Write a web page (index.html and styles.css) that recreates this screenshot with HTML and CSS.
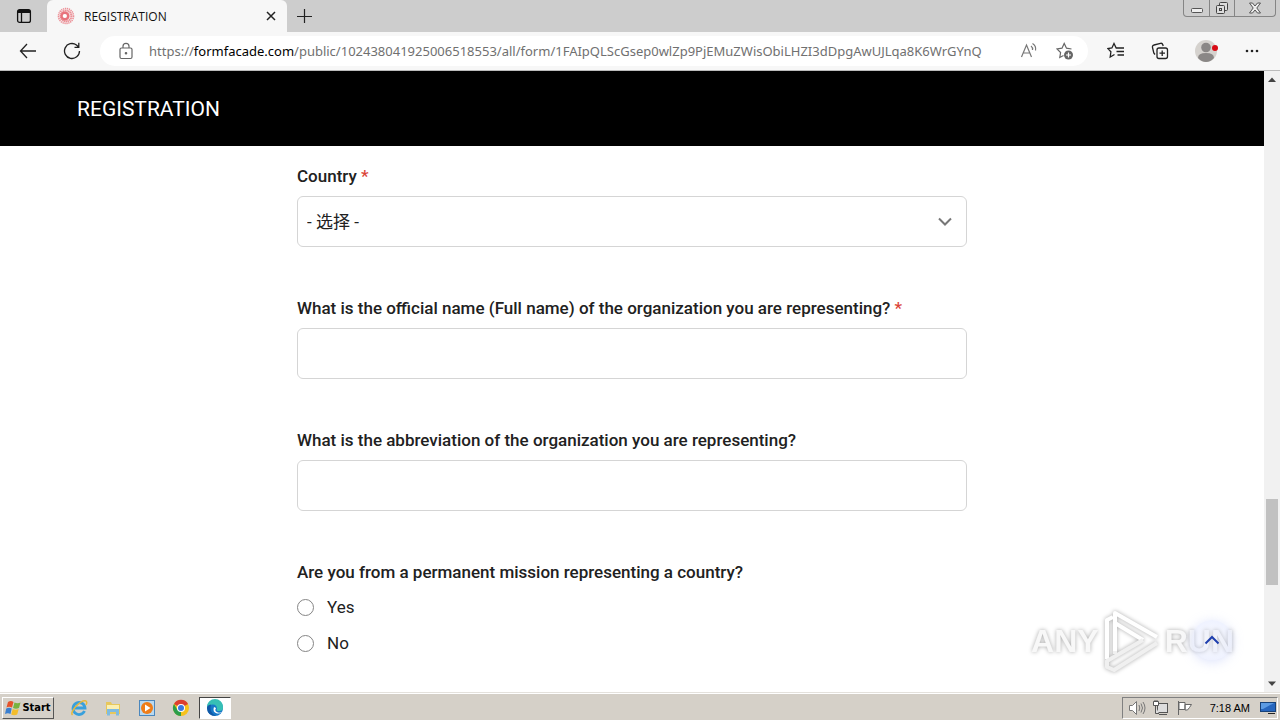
FILE: index.html
```html
<!DOCTYPE html>
<html lang="en">
<head>
  <meta charset="UTF-8">
  <meta name="viewport" content="width=device-width, initial-scale=1.0">
  <title>REGISTRATION</title>
  <link rel="stylesheet" href="styles.css">
</head>
<body>
  <div class="tab-strip">
    <button class="tab-menu" aria-label="Tab actions">
      <svg width="16" height="16" viewBox="0 0 16 16" fill="none" stroke="#111" stroke-width="1.3"><rect x="1.6" y="1.6" width="12.8" height="12.8" rx="2"/><path d="M5.500 5v9"/><path d="M2 3.500h12" stroke-width="3"/></svg>
    </button>
    <div class="tab">
      <svg width="18" height="18" viewBox="0 0 18 18" fill="none" stroke="#ec8f96"><circle cx="9" cy="9" r="7.5" stroke-width="1.6" stroke-dasharray="1.3 .7"/><circle cx="9" cy="9" r="5.4" stroke-width="2" stroke-dasharray="1.4 .4"/><circle cx="8" cy="9" r="3.300" stroke-width="2.600" stroke="#e8737c"/><circle cx="7.500" cy="9" r="1.800" fill="#fff" stroke="none"/></svg>
      <span class="tab-title">REGISTRATION</span>
      <button class="tab-close" aria-label="Close tab">
        <svg width="10" height="10" viewBox="0 0 10 10" stroke="#222" stroke-width="1.5"><path d="M1 1l8 8M9 1L1 9"/></svg>
      </button>
    </div>
    <button class="tab-new" aria-label="New tab">
      <svg width="16" height="16" viewBox="0 0 16 16" stroke="#222" stroke-width="1.2"><path d="M8.5 1v14M1 8.500h15"/></svg>
    </button>
    <div class="window-buttons">
      <button aria-label="Minimize"><svg width="14" height="14" viewBox="0 0 14 14" fill="#eee" stroke="#555"><rect x="1.5" y="7.5" width="11" height="4" rx="1"/></svg></button>
      <button aria-label="Restore"><svg width="14" height="14" viewBox="0 0 14 14" fill="#ddd" stroke="#444"><rect x="4.5" y="1.5" width="8" height="8" rx="1"/><rect x="1.5" y="4.5" width="8" height="8" rx="1"/><rect x="4.5" y="7.5" width="2" height="2"/></svg></button>
      <button class="wide" aria-label="Close"><svg width="14" height="14" viewBox="0 0 14 14"><path d="M1.5 2h3L7 5l2.500-3h3L8.800 7l3.700 5h-3L7 9l-2.500 3h-3l3.700-5z" fill="#eee" stroke="#555"/></svg></button>
    </div>
  </div>

  <div class="toolbar">
    <button aria-label="Back"><svg width="18" height="18" viewBox="0 0 18 18" fill="none" stroke="#222" stroke-width="1.3"><path d="M17 9H1.500M8 2L1.500 9 8 16"/></svg></button>
    <button class="reload" aria-label="Refresh"><svg width="18" height="18" viewBox="0 0 18 18" fill="none" stroke="#222" stroke-width="1.3"><path d="M16.500 9A7.500 7.500 0 1 1 13.500 3l2 2M15.800 .800V5.300H11.500"/></svg></button>
    <div class="address">
      <svg width="14" height="18" viewBox="0 0 14 18" fill="none" stroke="#666" stroke-width="1.2"><rect x="1" y="6" width="12" height="10.5" rx="1.5"/><path d="M4 6V4.300a3 3 0 0 1 6 0V6"/><circle cx="7" cy="11.200" r=".7" fill="#666"/></svg>
      <span class="url">https://<b>formfacade.com</b>/public/102438041925006518553/all/form/1FAIpQLScGsep0wlZp9PjEMuZWisObiLHZI3dDpgAwUJLqa8K6WrGYnQ</span>
      <button aria-label="Read aloud"><svg width="18" height="18" viewBox="0 0 18 18" fill="none" stroke="#777" stroke-width="1.2"><path d="M1.500 15L6.500 3l5 12M3.300 11h6.500M11 4q2 1.500 1.500 4M12.500 1.500q4 2.500 3 7"/></svg></button>
      <button aria-label="Add to favorites"><svg width="18" height="18" viewBox="0 0 18 18" fill="none" stroke="#666" stroke-width="1.2"><path d="M15.500 7l-5-.800-2.300-4.700-2.200 4.700L1 7l3.600 3.500-.8 5 3.700-2"/><circle cx="12.500" cy="13" r="4.500" fill="#666" stroke="none"/><path d="M12.500 10.500v5M10 13h5" stroke="#fff"/></svg></button>
    </div>
    <button class="favorites" aria-label="Favorites"><svg width="18" height="18" viewBox="0 0 18 18" fill="none" stroke="#222" stroke-width="1.3"><path d="M11 6H9.200L7 1.500 4.900 6l-4 .600 3 3.200-.700 5.200 4.300-2.500M10.500 6H17M9.500 9.500H17M10.500 13H17"/></svg></button>
    <button class="collections" aria-label="Collections"><svg width="18" height="18" viewBox="0 0 18 18" fill="none" stroke="#222" stroke-width="1.3"><rect x="6" y="6" width="10.5" height="10.5" rx="2"/><path d="M11.200 8.500v5.500M8.500 11.200H14M4 12.500L2.800 11 1.500 5.500a2 2 0 0 1 1.500-2.500l6.500-1.700a2 2 0 0 1 2.300 1.400l.4 1.300"/></svg></button>
    <button class="profile" aria-label="Profile"><svg width="24" height="24" viewBox="0 0 24 24"><circle cx="12" cy="12" r="11" fill="#d5d2ce"/><circle cx="12" cy="8.500" r="4.800" fill="#8a8786"/><path d="M4 19q0-5 8-5t8 5q-3.500 4-8 4t-8-4z" fill="#8a8786"/><circle cx="21" cy="9" r="3" fill="#d80b15"/></svg></button>
    <button class="more" aria-label="Settings and more"><svg width="16" height="16" viewBox="0 0 16 16" fill="#222"><circle cx="3" cy="8" r="1.3"/><circle cx="8" cy="8" r="1.3"/><circle cx="13" cy="8" r="1.3"/></svg></button>
  </div>

  <div class="viewport">
    <div class="page">
      <header class="page-header"><h1>REGISTRATION</h1></header>
      <form class="form">
        <div class="field">
          <label class="question" for="country">Country <span class="required">*</span></label>
          <div class="select-wrap">
            <select id="country"><option>- 选择 -</option></select>
            <svg width="14" height="10" viewBox="0 0 14 10" fill="none" stroke="#777" stroke-width="2"><path d="M1 1.500l6 6 6-6"/></svg>
          </div>
        </div>
        <div class="field">
          <label class="question" for="org-name">What is the official name (Full name) of the organization you are representing? <span class="required">*</span></label>
          <input class="text" id="org-name" type="text">
        </div>
        <div class="field">
          <label class="question" for="org-abbr">What is the abbreviation of the organization you are representing?</label>
          <input class="text" id="org-abbr" type="text">
        </div>
        <fieldset class="field">
          <legend class="question">Are you from a permanent mission representing a country?</legend>
          <label class="choice"><input type="radio" name="mission">Yes</label>
          <label class="choice"><input type="radio" name="mission">No</label>
        </fieldset>
      </form>
    </div>

    <div class="scrollbar">
      <svg width="16" height="17" viewBox="0 0 16 17"><path d="M4 11l4-4.500 4 4.500z" fill="#444"/></svg>
      <div class="track">
        <div class="thumb"></div>
      </div>
      <svg width="16" height="17" viewBox="0 0 16 17"><path d="M4 6.500l4 4.500 4-4.500z" fill="#444"/></svg>
    </div>

    <div class="watermark">
      <span>ANY</span>
      <svg width="60" height="66" viewBox="0 0 60 66" fill="none" stroke-width="4" stroke-linejoin="round"><path d="M5 51V12l6-3M13 46V5l42 24M13 15l28 17" stroke="#fff"/><path d="M41 32L5 53v6l7 3 43-27M13 46v-3" stroke="#f0f0f0"/></svg>
      <span>RUN</span>
    </div>
    <button class="to-top" aria-label="Back to top"><svg width="16" height="10" viewBox="0 0 16 10" fill="none" stroke="#1f3fae" stroke-width="2"><path d="M1.500 8.500L8 2l6.500 6.500"/></svg></button>
  </div>

  <div class="taskbar">
    <button class="start">
      <svg width="17" height="16" viewBox="0 0 17 16"><path d="M3 2q3-2 5.500 0L7 7.500q-3-1.500-5.500 0z" fill="#e5532b"/><path d="M9.500 2.500q3 1.500 6 0L14 8q-3 1.500-6 0z" fill="#78b340"/><path d="M1.200 8.500q3-1.500 5.500 0L5.500 14Q3 12.500 0 14z" fill="#3a7fd0"/><path d="M7.700 9q3 1.500 6 0l-1.500 5.500q-3 1.500-6 0z" fill="#f3bd2c"/></svg>
      Start
    </button>
    <button class="task" aria-label="Internet Explorer"><svg width="18" height="18" viewBox="0 0 18 18" fill="none"><path d="M14.500 12A6 6 0 1 1 15 9H5" stroke="#39a0dc" stroke-width="2.8"/><path d="M2.500 16C-1 13 11 .500 16 2q1.500 1 0 4" stroke="#e6b83b" stroke-width="1.5"/></svg></button>
    <button class="task" aria-label="Explorer"><svg width="18" height="18" viewBox="0 0 18 18"><path d="M2 3h5l1 2h8v10H2z" fill="#e7c75c"/><path d="M3 6h12v4H3z" fill="#fbefb1"/><path d="M3 16.500V10h12v6.500h-3V13H6v3.500z" fill="#7fbbe0"/></svg></button>
    <button class="task" aria-label="Media Player"><svg width="18" height="18" viewBox="0 0 18 18"><rect x="1.5" y="1.5" width="15" height="15" fill="#b9d9f0" stroke="#4b87bd"/><circle cx="9" cy="9" r="6" fill="#ef7d18"/><path d="M7 5.500l5.500 3.500L7 12.500z" fill="#fff"/></svg></button>
    <button class="task" aria-label="Chrome"><svg width="18" height="18" viewBox="0 0 18 18"><circle cx="9" cy="9" r="8" fill="#f6c21c"/><path d="M9 9L2 5a8 8 0 0 1 14 0z" fill="#dc3e30"/><path d="M9 9v8A8 8 0 0 1 2 5l3.500 6z" fill="#2c9e4b"/><circle cx="9" cy="9" r="4" fill="#fff"/><circle cx="9" cy="9" r="3" fill="#3b78e0"/></svg></button>
    <button class="task active" aria-label="Edge"><svg width="18" height="18" viewBox="0 0 18 18"><circle cx="9" cy="9" r="8" fill="#1678c8"/><path d="M1 8a8 8 0 0 1 16 0q.5 4-4 4-3 0-2-2 0-5-5-4.500Q2.500 6 1 8z" fill="#36bfb5"/><path d="M8 8q-2 5 3 6.500 3 .5 5-1.500-4 1.500-6-.5-1.500-1.500 0-3.500z" fill="#fff"/><path d="M1 9q0-3 4-3.500Q2.500 13 10 17 1.500 17 1 9z" fill="#1159a6"/></svg></button>
    <div class="tray">
      <svg width="18" height="16" viewBox="0 0 18 16" fill="#fff" stroke="#777"><path d="M1.500 5.500h3l4-4v13l-4-4h-3z"/><path d="M11 5q1.500 3 0 6M13 3.500q3 4.500 0 9M15 2q4 6 0 12" fill="none"/></svg>
      <svg width="18" height="16" viewBox="0 0 18 16" fill="#ddd" stroke="#555"><rect x="5.5" y="3.5" width="10" height="9"/><path d="M7 14.500h8M3.500 6v7.500H7"/><path d="M1.500 1.500h5v4h-5zM3 0v2M5 0v2" fill="#fff"/></svg>
      <svg width="18" height="16" viewBox="0 0 18 16" fill="#fff" stroke="#666"><path d="M2.500 15V1M3 2.500h6v7H3zM9 4.500h6.500l-2 3-2 2.500H9z"/></svg>
      <time>7:18 AM</time>
      <svg width="16" height="14" viewBox="0 0 16 14"><rect x=".5" y="1.5" width="15" height="9" fill="#2766be" stroke="#174279"/><path d="M1 2h13L3 8H1z" fill="#5c9be3"/><path d="M8 12.500h7" stroke="#222"/></svg>
    </div>
  </div>
</body>
</html>
```
FILE: styles.css
```css
* {
  box-sizing: border-box;
}
body {
  margin: 0;
  height: 100vh;
  display: flex;
  flex-direction: column;
  overflow: hidden;
  background: #fff;
  font-family: Roboto, "Noto Sans CJK SC", sans-serif;
}
button {
  display: flex;
  align-items: center;
  justify-content: center;
  flex: none;
  margin: 0;
  padding: 0;
  border: 0;
  background: none;
}
svg {
  flex: none;
}

/* tabs */
.tab-strip {
  flex: none;
  display: flex;
  height: 32px;
  background: #cdcdcd;
}
.tab-menu {
  width: 47px;
}
.tab {
  display: flex;
  align-items: center;
  width: 240px;
  padding: 0 10px;
  gap: 9px;
  border-radius: 6px 6px 0 0;
  background: #f7f7f7;
}
.tab-title {
  flex: 1;
  font: 12px "Open Sans", sans-serif;
  color: #111;
}
.tab-close {
  width: 12px;
}
.tab-new {
  width: 34px;
}
.window-buttons {
  display: flex;
  height: 17px;
  margin: 0 4px 0 auto;
  border: 1px solid #858585;
  border-top: 0;
  border-radius: 0 0 4px 4px;
}
.window-buttons button {
  width: 25px;
}
.window-buttons button + button {
  border-left: 1px solid #858585;
}
.window-buttons .wide {
  width: 41px;
}

/* toolbar */
.toolbar {
  flex: none;
  display: flex;
  align-items: center;
  height: 39px;
  padding: 0 20px 0 19px;
  border-bottom: 1px solid #bbb;
  background: #f7f7f7;
}
.reload {
  margin-left: 26px;
}
.address {
  flex: 1;
  min-width: 0;
  display: flex;
  align-items: center;
  height: 30px;
  margin-left: 19px;
  padding: 0 14px 0 19px;
  gap: 18px;
  border-radius: 15px;
  background: #fff;
}
.url {
  flex: 1;
  min-width: 0;
  margin-left: -2px;
  overflow: hidden;
  white-space: nowrap;
  font: 13px "Noto Sans", sans-serif;
  color: #707070;
}
.url b {
  font-weight: 400;
  color: #000;
}
.favorites {
  margin-left: 19px;
}
.collections {
  margin-left: 26px;
}
.profile {
  margin-left: 25px;
}
.more {
  margin-left: 26px;
}

/* page */
.viewport {
  position: relative;
  flex: 1;
  min-height: 0;
  display: flex;
}
.page {
  flex: 1;
  overflow: hidden;
}
.page-header {
  display: flex;
  align-items: center;
  height: 75px;
  padding: 0 77px;
  background: #000;
}
.page-header h1 {
  margin: 0;
  font-size: 21px;
  font-weight: 400;
  color: #fff;
}
.form {
  max-width: 670px;
  margin: 0 auto;
  padding-top: 18px;
}
.field {
  margin: 0 0 49px;
  padding: 0;
  border: 0;
}
.question {
  display: block;
  margin-bottom: 8px;
  padding: 0;
  font-size: 17px;
  line-height: 24px;
  font-weight: 500;
  color: #212121;
}
.required {
  color: #db4437;
}
.text,
.select-wrap select {
  display: block;
  width: 100%;
  height: 51px;
  padding: 0 9px;
  border: 1px solid #d5d5d5;
  border-radius: 6px;
  background: #fff;
  font-family: inherit;
  font-size: 17px;
  color: #212121;
}
.select-wrap {
  display: grid;
  align-items: center;
}
.select-wrap > * {
  grid-area: 1 / 1;
}
.select-wrap select {
  appearance: none;
}
.select-wrap svg {
  justify-self: end;
  margin-right: 15px;
  pointer-events: none;
}
.choice {
  display: flex;
  align-items: center;
  gap: 13px;
  margin: 3px 0 12px;
  font-size: 17px;
  line-height: 24px;
  color: #212121;
}
.choice input {
  appearance: none;
  width: 17px;
  height: 17px;
  margin: 0;
  border: 1px solid #858585;
  border-radius: 50%;
}

.scrollbar {
  display: flex;
  flex-direction: column;
  width: 16px;
  background: #f1f1f1;
}
.track {
  flex: 1;
  display: flex;
  flex-direction: column;
}
.track::before {
  content: "";
  flex: 411;
}
.track::after {
  content: "";
  flex: 90;
}
.thumb {
  height: 86px;
  margin: 0 2px;
  background: #c1c1c1;
}

/* floating over the form */
.to-top {
  position: absolute;
  right: 48px;
  bottom: 32px;
  width: 40px;
  height: 40px;
  border-radius: 50%;
  background: radial-gradient(rgba(225, 231, 255, 0.2), rgba(215, 223, 255, 0.5));
  box-shadow: 0 2px 12px rgba(205, 213, 250, 0.7);
}
.watermark {
  position: absolute;
  right: 46px;
  bottom: 18px;
  display: flex;
  align-items: center;
  gap: 3px;
  color: #f8f8f8;
  font: bold 32px "Liberation Sans Narrow", "Liberation Sans", sans-serif;
  filter: drop-shadow(0 0 2px #aaa);
  pointer-events: none;
}

/* taskbar */
.taskbar {
  flex: none;
  display: flex;
  align-items: center;
  height: 28px;
  padding: 2px 0 0 2px;
  border-top: 1px solid #e4e1dc;
  background: #d5d0c8;
  box-shadow: inset 0 1px #fff;
}
.start {
  width: 52px;
  height: 22px;
  gap: 0;
  margin-right: 9px;
  border: 1px solid;
  border-color: #fff #555 #555 #fff;
  font: bold 11px "DejaVu Sans Condensed", "DejaVu Sans", sans-serif;
  color: #000;
}
.task {
  width: 32px;
  height: 22px;
  margin-right: 2px;
}
.active {
  border: 1px solid;
  border-color: #444 #fff #fff #444;
  background: #fff;
}
.tray {
  display: flex;
  align-items: center;
  height: 22px;
  margin-left: auto;
  margin-right: 2px;
  padding: 0 1px 0 5px;
  gap: 6px;
  border: 1px solid;
  border-color: #808080 #fff #fff #808080;
}
.tray time {
  margin: 0 4px 0 10px;
  font: 11px "Liberation Sans", sans-serif;
  color: #000;
}
```
